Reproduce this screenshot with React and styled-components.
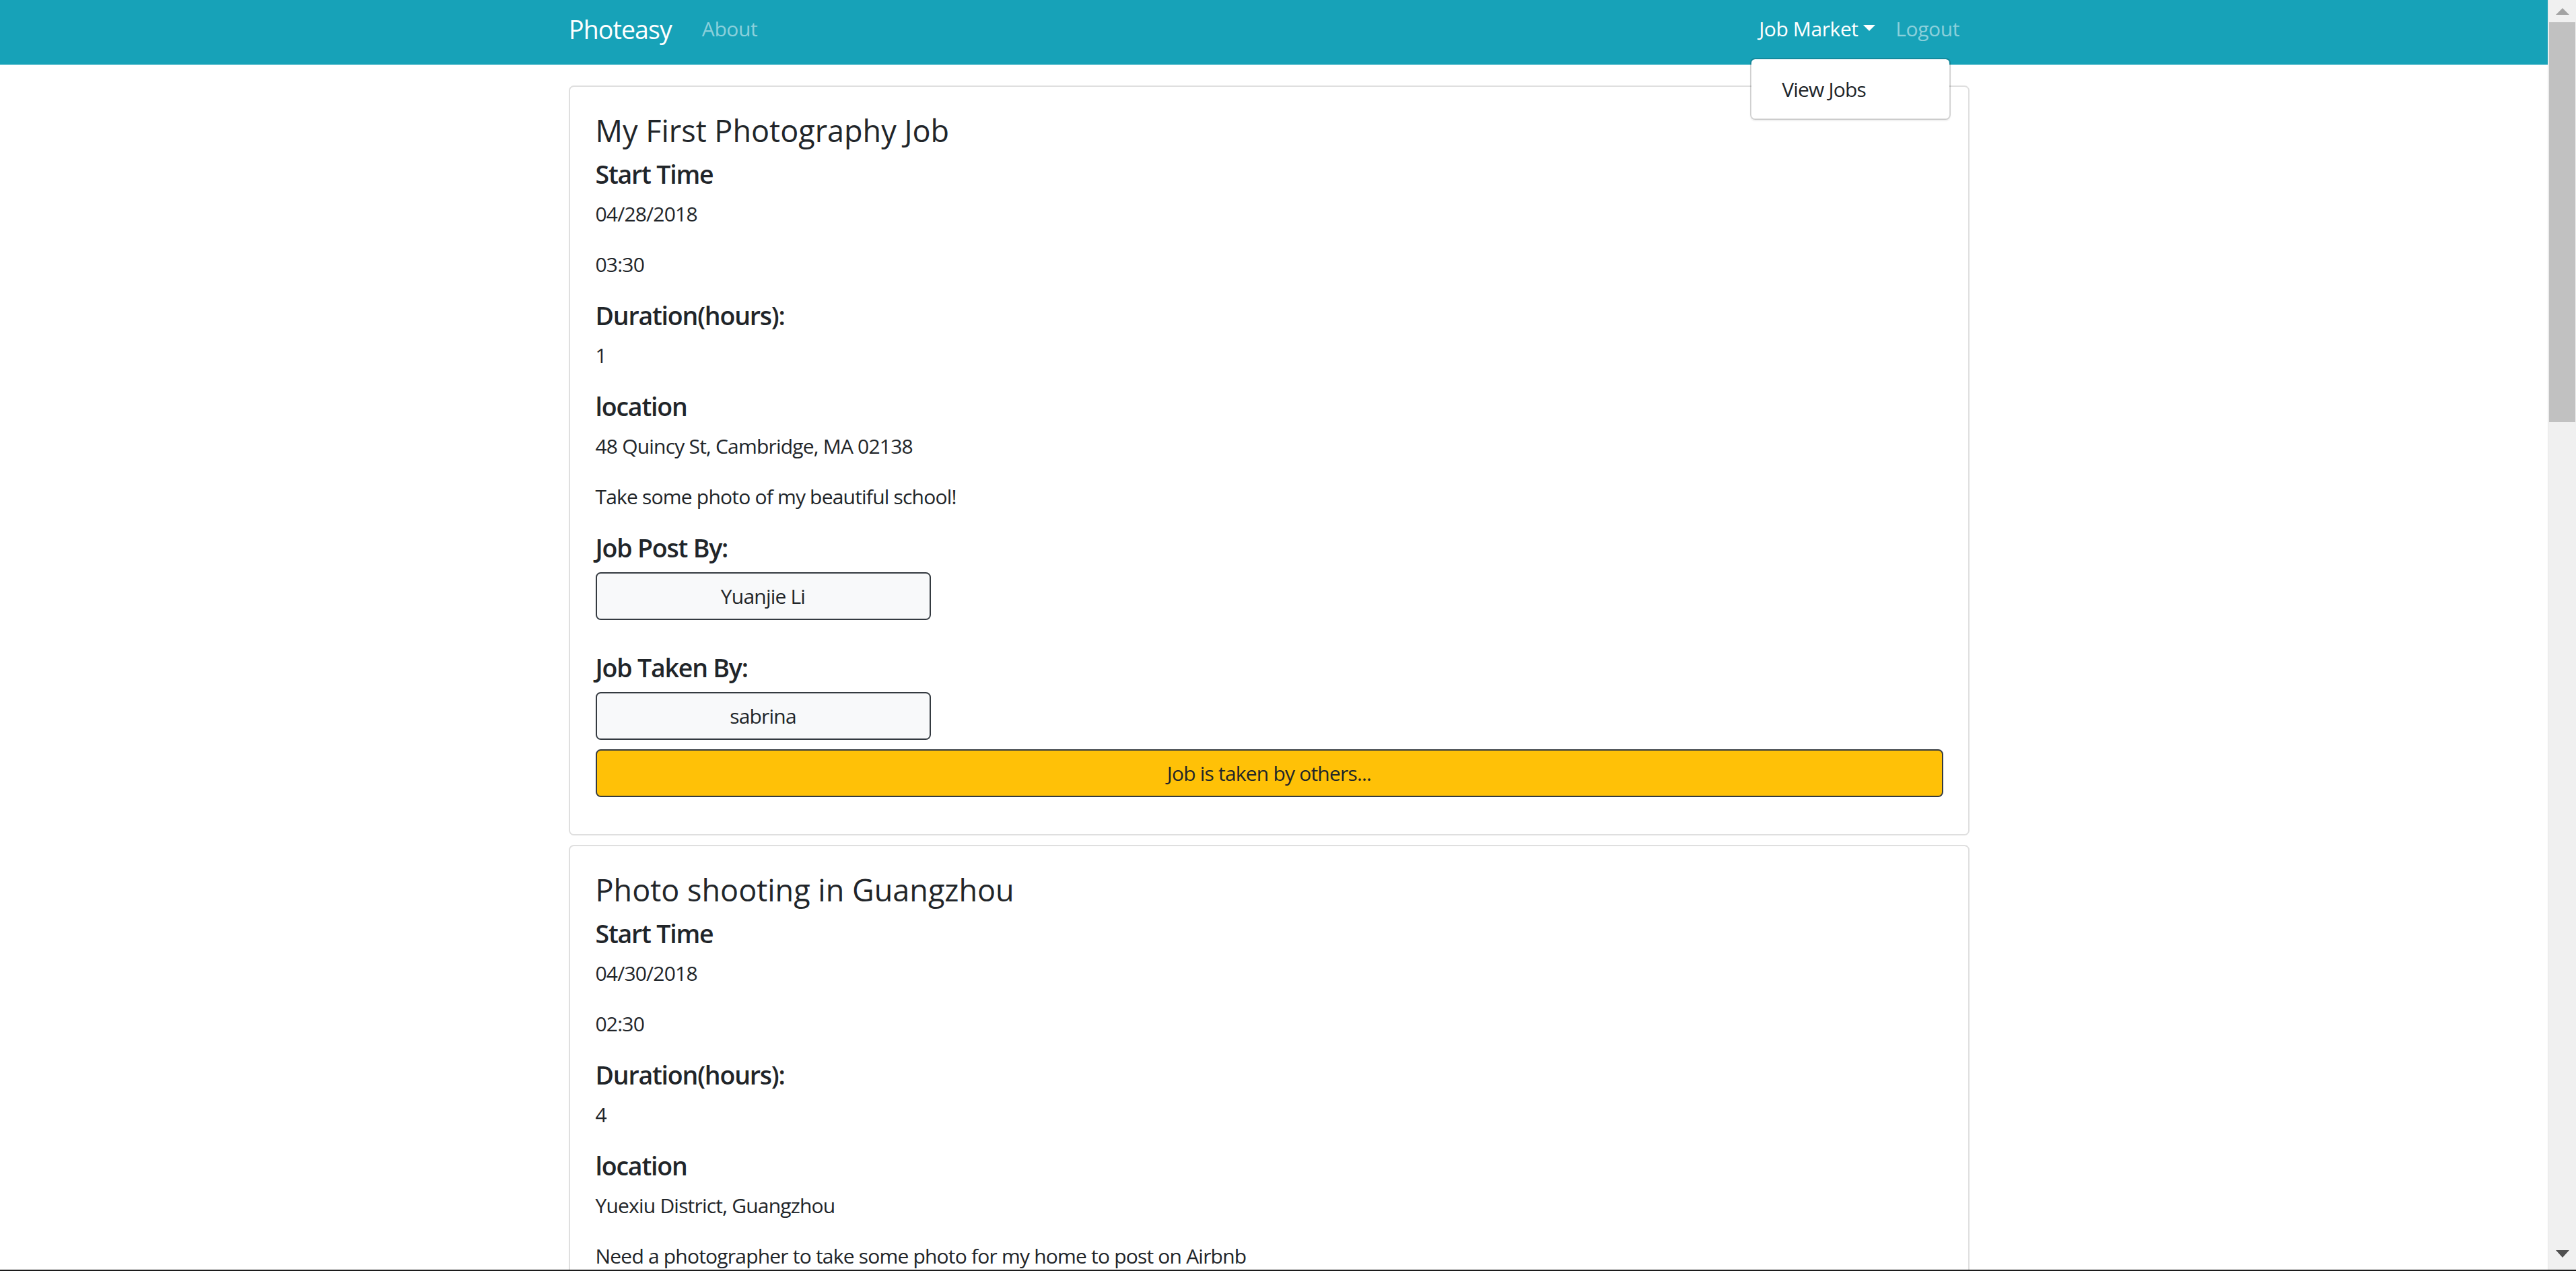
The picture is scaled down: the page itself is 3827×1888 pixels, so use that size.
import React from 'react'
import styled, { createGlobalStyle } from 'styled-components'

const GlobalStyle = createGlobalStyle`
  * {
    box-sizing: border-box;
  }
  html,
  body {
    margin: 0;
    height: 100%;
    overflow: hidden;
  }
  body {
    font-family: 'Open Sans', 'Noto Sans', sans-serif;
    font-size: 30px;
    line-height: 45px;
    letter-spacing: -0.8px;
    color: #212529;
    background: #fff;
  }
  #root {
    height: 100%;
  }
`

const Window = styled.div`
  height: 100%;
  display: flex;
  flex-direction: column;
`
const Viewport = styled.div`
  flex: 1;
  min-height: 0;
  display: flex;
`
const Page = styled.div`
  flex: 1;
  min-width: 0;
  overflow: hidden;
`
const WindowEdge = styled.div`
  flex-shrink: 0;
  height: 2px;
  background: #1c1c1c;
`

/* navbar */
const Navbar = styled.nav`
  height: 96px;
  background: #17a2b8;
`
const NavInner = styled.div`
  width: 2081px;
  margin-left: 845px;
  padding-top: 16px;
  display: flex;
  align-items: flex-start;
`
const Brand = styled.a`
  font-size: 37.5px;
  line-height: 56px;
  letter-spacing: -0.9px;
  color: #fff;
  margin-right: 30px;
  text-decoration: none;
`
const NavGroup = styled.div`
  display: flex;
  margin-top: 4px;
  margin-left: ${(props) => (props.$right ? 'auto' : '0')};
`
const NavItem = styled.div`
  position: relative;
`
const NavLink = styled.a`
  display: block;
  padding: 0 15px;
  line-height: 45px;
  letter-spacing: -0.4px;
  text-decoration: none;
  color: ${(props) => (props.$active ? '#fff' : 'rgba(255, 255, 255, 0.5)')};
`
const Caret = styled.span`
  display: inline-block;
  margin-left: 7.6px;
  vertical-align: 7.6px;
  border-top: 9px solid #fff;
  border-left: 9px solid transparent;
  border-right: 9px solid transparent;
`
const Dropdown = styled.div`
  position: absolute;
  top: 66px;
  left: 2px;
  width: 298px;
  padding: 14px 0;
  background: #fff;
  background-clip: padding-box;
  border: 2px solid rgba(0, 0, 0, 0.15);
  border-radius: 7.5px;
  box-shadow: 0 2px 2px rgba(0, 0, 0, 0.06);
  z-index: 10;
`
const DropItem = styled.a`
  display: block;
  padding: 7.5px 45px;
  line-height: 45px;
  color: #212529;
  text-decoration: none;
  white-space: nowrap;
`

/* content */
const Container = styled.main`
  width: 2081px;
  margin-left: 845px;
  padding-top: 31px;
`
const Card = styled.section`
  display: flex;
  flex-direction: column;
  align-items: flex-start;
  border: 2px solid #dfdfdf;
  border-radius: 7.5px;
  padding: 37.5px;
  margin-bottom: 14px;
`
const Title = styled.h4`
  margin: 0 0 14px;
  font-size: 45px;
  line-height: 54px;
  font-weight: 400;
  letter-spacing: 0;
`
const Label = styled.h5`
  margin: 1px 0 14px;
  font-size: 37.5px;
  line-height: 45px;
  font-weight: 600;
  letter-spacing: -1.2px;
`
const Text = styled.p`
  margin: 0 0 30px;
`
const Button = styled.button`
  display: block;
  align-self: ${(props) => (props.$wide ? 'stretch' : 'flex-start')};
  width: ${(props) => (props.$wide ? 'auto' : '498px')};
  margin: 0 0 ${(props) => props.$after || '14px'};
  padding: 11px 0;
  font-family: inherit;
  font-size: 30px;
  line-height: 45px;
  letter-spacing: inherit;
  color: #212529;
  text-align: center;
  background: ${(props) => (props.$wide ? '#ffc107' : '#f8f9fa')};
  border: 2px solid #343a40;
  border-radius: 7.5px;
`

/* fake window scrollbar */
const Scrollbar = styled.div`
  flex-shrink: 0;
  width: 42px;
  display: flex;
  flex-direction: column;
  background: #f0f0f0;
  border-left: 1px solid #e8e8e8;
`
const ArrowBox = styled.div`
  height: 33px;
  display: flex;
  justify-content: center;
  align-items: ${(props) => (props.$down ? 'flex-start' : 'center')};
  padding-top: ${(props) => (props.$down ? '8px' : '0')};
  margin-top: ${(props) => (props.$down ? 'auto' : '0')};
  margin-bottom: ${(props) => (props.$down ? '4px' : '0')};
`
const Thumb = styled.div`
  height: 594px;
  margin: 0 1px;
  background: #c1c1c1;
`

const jobs = [
  {
    id: 1,
    title: 'My First Photography Job',
    date: '04/28/2018',
    time: '03:30',
    hours: '1',
    location: '48 Quincy St, Cambridge, MA 02138',
    note: 'Take some photo of my beautiful school!',
    postedBy: 'Yuanjie Li',
    takenBy: 'sabrina',
  },
  {
    id: 2,
    title: 'Photo shooting in Guangzhou',
    date: '04/30/2018',
    time: '02:30',
    hours: '4',
    location: 'Yuexiu District, Guangzhou',
    note: 'Need a photographer to take some photo for my home to post on Airbnb',
    postedBy: 'Yuanjie Li',
    takenBy: 'sabrina',
  },
]

function JobCard({ job }) {
  return (
    <Card>
      <Title>{job.title}</Title>
      <Label>Start Time</Label>
      <Text>{job.date}</Text>
      <Text>{job.time}</Text>
      <Label>Duration(hours):</Label>
      <Text>{job.hours}</Text>
      <Label>location</Label>
      <Text>{job.location}</Text>
      <Text>{job.note}</Text>
      <Label>Job Post By:</Label>
      <Button $after='47px'>{job.postedBy}</Button>
      <Label>Job Taken By:</Label>
      <Button>{job.takenBy}</Button>
      <Button $wide $after='18px'>
        Job is taken by others...
      </Button>
    </Card>
  )
}

export default function App() {
  return (
    <Window>
      <GlobalStyle />
      <Viewport>
        <Page>
          <Navbar>
            <NavInner>
              <Brand href='#'>Photeasy</Brand>
              <NavGroup>
                <NavLink href='#'>About</NavLink>
              </NavGroup>
              <NavGroup $right>
                <NavItem>
                  <NavLink href='#' $active>
                    Job Market
                    <Caret />
                  </NavLink>
                  <Dropdown>
                    <DropItem href='#'>View Jobs</DropItem>
                  </Dropdown>
                </NavItem>
                <NavLink href='#'>Logout</NavLink>
              </NavGroup>
            </NavInner>
          </Navbar>
          <Container>
            {jobs.map((job) => (
              <JobCard key={job.id} job={job} />
            ))}
          </Container>
        </Page>
        <Scrollbar>
          <ArrowBox>
            <svg width='20' height='10' viewBox='0 0 20 10'>
              <path d='M0 10 L10 0 L20 10 Z' fill='#a3a3a3' />
            </svg>
          </ArrowBox>
          <Thumb />
          <ArrowBox $down>
            <svg width='20' height='11' viewBox='0 0 20 11'>
              <path d='M0 0 L20 0 L10 11 Z' fill='#505050' />
            </svg>
          </ArrowBox>
        </Scrollbar>
      </Viewport>
      <WindowEdge />
    </Window>
  )
}
